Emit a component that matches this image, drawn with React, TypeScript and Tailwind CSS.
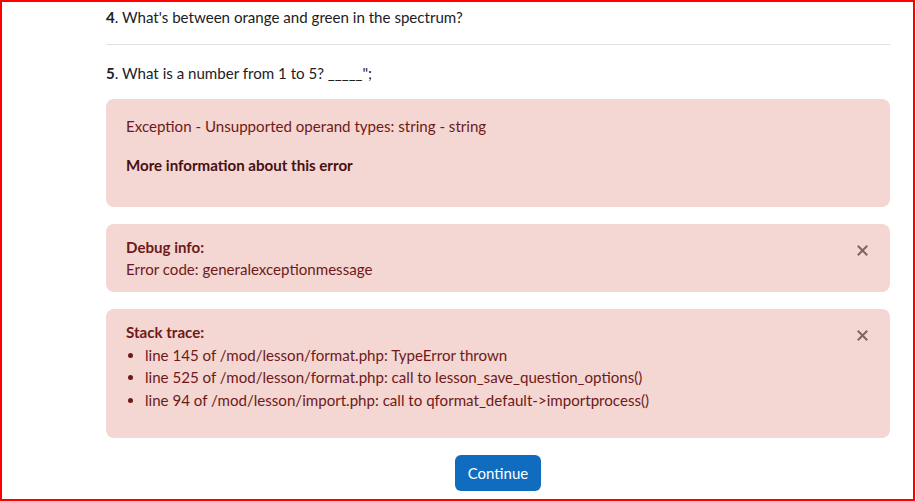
const stack = [
  'line 145 of /mod/lesson/format.php: TypeError thrown',
  'line 525 of /mod/lesson/format.php: call to lesson_save_question_options()',
  'line 94 of /mod/lesson/import.php: call to qformat_default->importprocess()',
];

function CloseButton() {
  return (
    <button
      type="button"
      className="absolute right-[22px] top-[14px] w-[12px] h-[24px] flex items-center justify-center text-[#7a6664]"
      aria-label="Close"
    >
      <svg width="11" height="11" viewBox="0 0 11 11">
        <path d="M1.5 1.5 L9.5 9.5 M9.5 1.5 L1.5 9.5" stroke="currentColor" strokeWidth="2" strokeLinecap="square" />
      </svg>
    </button>
  );
}

export default function App() {
  return (
    <div
      className="w-[915px] h-[501px] border-2 border-[#ff0000] bg-white overflow-hidden text-[15.1px] text-[#1d2125]"
      style={{ fontFamily: 'Lato, "Liberation Sans", sans-serif' }}
    >
      <div className="ml-[104px] w-[784px] pt-[4px]">
        <div className="leading-[22px]">
          <b>4</b>. What's between orange and green in the spectrum?
        </div>
        <hr className="mt-[16px] border-0 border-t border-[#dee2e6]" />
        <div className="mt-[17px] leading-[22px]">
          <b>5</b>. What is a number from 1 to 5? _____";
        </div>

        <div className="mt-[15px] rounded-[8px] bg-[#f4d6d2] text-[#6e1a1a] px-[20px] pt-[16px] pb-[16px] leading-[22px]">
          <p>Exception - Unsupported operand types: string - string</p>
          <p className="mt-[17px] mb-[15px]">
            <a href="#" className="font-bold text-[#461111]">More information about this error</a>
          </p>
        </div>

        <div className="relative mt-[17px] rounded-[8px] bg-[#f4d6d2] text-[#6e1a1a] px-[20px] py-[12px] leading-[22px]">
          <div className="font-bold">Debug info:</div>
          <div>Error code: generalexceptionmessage</div>
          <CloseButton />
        </div>

        <div className="relative mt-[17px] rounded-[8px] bg-[#f4d6d2] text-[#6e1a1a] px-[20px] py-[12px] leading-[22.5px]">
          <div className="font-bold">Stack trace:</div>
          <ul className="list-disc pl-[19px] mb-[15px] marker:text-[#6e1a1a]">
            {stack.map((s) => (
              <li key={s}>{s}</li>
            ))}
          </ul>
          <CloseButton />
        </div>

        <div className="mt-[17px] flex justify-center">
          <button type="button" className="h-[36px] px-[13px] rounded-[6px] bg-[#0f6cbf] text-white text-[15px] leading-[22px]">
            Continue
          </button>
        </div>
      </div>
    </div>
  );
}
